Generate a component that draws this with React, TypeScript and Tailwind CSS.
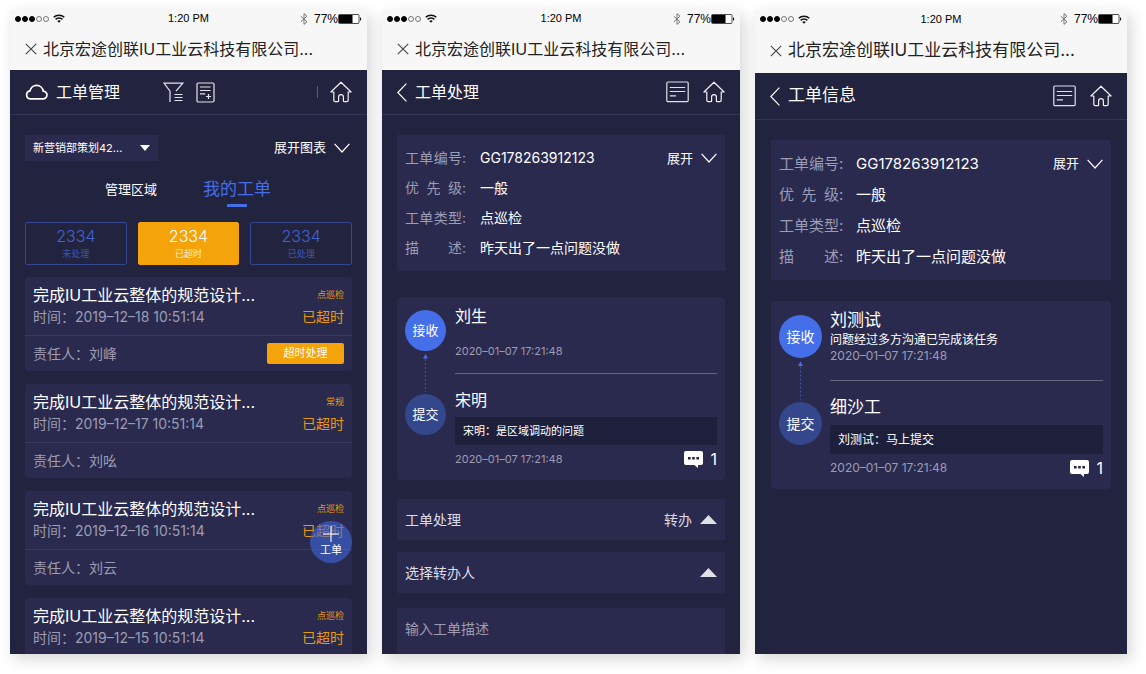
import { useState } from "react";
import type { ReactNode } from "react";
import clsx from "clsx";

const orders = [
  { id: 1, time: "2019–12–18 10:51:14", type: "点巡检", owner: "刘峰", overdue: true },
  { id: 2, time: "2019–12–17 10:51:14", type: "常规", owner: "刘吆", overdue: false },
  { id: 3, time: "2019–12–16 10:51:14", type: "点巡检", owner: "刘云", overdue: false },
  { id: 4, time: "2019–12–15 10:51:14", type: "点巡检", owner: null, overdue: false },
];

const counters = [
  { key: "todo", label: "未处理", count: 2334 },
  { key: "overdue", label: "已超时", count: 2334 },
  { key: "done", label: "已处理", count: 2334 },
];

const fields = [
  { label: "工单编号", value: "GG178263912123" },
  { label: "优 先 级", value: "一般" },
  { label: "工单类型", value: "点巡检" },
  { label: "描 述", value: "昨天出了一点问题没做" },
];

/* ---------- icons ---------- */

function WifiIcon() {
  return (
    <svg width="12" height="9" viewBox="0 0 12 9" fill="none" stroke="#111" strokeWidth="1.5">
      <path d="M.7 3.3a7.6 7.6 0 0 1 10.6 0" />
      <path d="M2.6 5.4a4.8 4.8 0 0 1 6.8 0" />
      <path d="M6 8.8 4.2 7a2.6 2.6 0 0 1 3.6 0z" fill="#111" stroke="none" />
    </svg>
  );
}

function BluetoothIcon() {
  return (
    <svg width="8" height="12" viewBox="0 0 8 12" fill="none" stroke="#777" strokeWidth="1">
      <path d="M.8 3.2 7 8.8 4 11.4V.6L7 3.2.8 8.8" />
    </svg>
  );
}

function BatteryIcon() {
  return (
    <svg width="24" height="10" viewBox="0 0 24 10">
      <rect x=".5" y=".5" width="20.5" height="9" rx="1" fill="#fff" stroke="#222" strokeWidth=".8" />
      <rect x="1" y="1" width="13.5" height="8" fill="#000" />
      <path d="M22 3.2c1.6.3 1.6 3.3 0 3.6z" fill="#111" />
    </svg>
  );
}

function CloseIcon() {
  return (
    <svg width="12" height="12" viewBox="0 0 12 12" fill="none" stroke="#444" strokeWidth="1.1">
      <path d="m.8.8 10.4 10.4M11.2.8.8 11.2" />
    </svg>
  );
}

function CloudIcon() {
  return (
    <svg width="23" height="16" viewBox="0 0 23 16" fill="none" stroke="#fff" strokeWidth="1.7">
      <path d="M5.2 14.9h12.7a3.9 3.9 0 0 0 .3-7.8 6.7 6.7 0 0 0-13.2-.3 4.1 4.1 0 0 0 .2 8.1z" />
    </svg>
  );
}

function FilterIcon() {
  return (
    <svg width="21" height="21" viewBox="0 0 21 21" fill="none" stroke="#e4e4ee" strokeWidth="1.2">
      <path d="M7 20V9.2L1 1.2h18.8L13 9.2" />
      <path d="M11.5 12.5h8M11.5 15.5h8M11.5 18.5h8" />
    </svg>
  );
}

function AddOrderIcon() {
  return (
    <svg width="19" height="21" viewBox="0 0 19 21" fill="none" stroke="#e4e4ee" strokeWidth="1.2">
      <rect x="1" y="1" width="17" height="19" rx="1.2" />
      <path d="M4 5h10.5M4 8.5h10.5M4 11.8h5.2M12.5 12v5M10 14.5h5" />
    </svg>
  );
}

function NoteIcon() {
  return (
    <svg width="23" height="22" viewBox="0 0 23 22" fill="none" stroke="#e0e0ea" strokeWidth="1.2">
      <rect x=".8" y="1" width="21.4" height="19.6" rx="1.2" />
      <path d="M3.8 6.5h15.4M3.8 10.5h15.4M3.8 14.8h6.2" />
    </svg>
  );
}

function HomeIcon() {
  return (
    <svg width="22" height="22" viewBox="0 0 22 22" fill="none" stroke="#f0f0f6" strokeWidth="1.2" strokeLinejoin="round">
      <path d="M11 1.2.9 11h2.9v8.3c0 .9.5 1.4 1.4 1.4h2.6c.5 0 .8-.3.8-.8V16c0-1.6 1-2.4 2.4-2.4s2.4.8 2.4 2.4v3.9c0 .5.3.8.8.8h2.6c.9 0 1.4-.5 1.4-1.4V11h2.9z" />
    </svg>
  );
}

function BackIcon() {
  return (
    <svg width="10" height="19" viewBox="0 0 10 19" fill="none" stroke="#fff" strokeWidth="1.2">
      <path d="M9.4.6.8 9.5l8.6 8.9" />
    </svg>
  );
}

function ChevronDown() {
  return (
    <svg width="16" height="10" viewBox="0 0 16 10" fill="none" stroke="#fff" strokeWidth="1.2">
      <path d="M.6.8 8 9 15.4.8" />
    </svg>
  );
}

function TriangleUp() {
  return (
    <svg width="17" height="9" viewBox="0 0 17 9" className="shrink-0">
      <path d="M8.5 0 17 9H0z" fill="#dfdfe8" />
    </svg>
  );
}

function CommentIcon() {
  return (
    <svg width="19" height="17" viewBox="0 0 19 17">
      <path
        d="M2 0h15a2 2 0 0 1 2 2v10a2 2 0 0 1-2 2h-3v3l-3.6-3H2a2 2 0 0 1-2-2V2a2 2 0 0 1 2-2z"
        fill="#fff"
      />
      <path d="M4 6h2.6v2.4H4zM8.2 6h2.6v2.4H8.2zM12.4 6H15v2.4h-2.6z" fill="#22233f" />
    </svg>
  );
}

/* ---------- shared ---------- */

function Phone({ large, children }: { large?: boolean; children: ReactNode }) {
  return (
    <section className="relative flex min-w-0 flex-col overflow-hidden bg-[#22233f] text-white shadow-[4px_5px_14px_rgba(0,0,0,0.16)]">
      <div className="shrink-0 bg-[#f7f7f7] text-[#222]">
        <div
          className={clsx(
            "grid grid-cols-3 items-center px-[5px] font-['Liberation_Sans',sans-serif] text-[11px] text-black",
            large ? "h-[18px]" : "h-[17px]"
          )}
        >
          <div className="flex items-center gap-1">
            <div className="flex gap-px">
              {[1, 2, 3, 4, 5].map((n) => (
                <i
                  key={n}
                  className={clsx("size-[6px] rounded-full border", n > 3 ? "border-[#777]" : "border-black bg-black")}
                />
              ))}
            </div>
            <WifiIcon />
          </div>
          <span className="text-center">1:20 PM</span>
          <div className="flex items-center justify-end">
            <BluetoothIcon />
            <span className="ml-1.5 text-xs">77%</span>
            <BatteryIcon />
          </div>
        </div>
        <div className={clsx("flex items-center gap-1.5 px-[15px]", large ? "h-[45px] text-[17px]" : "h-[43px] text-base")}>
          <button aria-label="关闭">
            <CloseIcon />
          </button>
          <h1 className="truncate">北京宏途创联IU工业云科技有限公司...</h1>
        </div>
      </div>
      {children}
    </section>
  );
}

function DetailHeader({ title, large }: { title: string; large?: boolean }) {
  return (
    <header
      className={clsx(
        "flex shrink-0 items-center border-b border-[#34355a] px-[15px]",
        large ? "h-[47px] text-[17px]" : "h-[45px] text-base"
      )}
    >
      <button aria-label="返回">
        <BackIcon />
      </button>
      <h2 className="ml-2">{title}</h2>
      <button className="ml-auto" aria-label="工单记录">
        <NoteIcon />
      </button>
      <button className="ml-3.5" aria-label="首页">
        <HomeIcon />
      </button>
    </header>
  );
}

function OrderFields({ large }: { large?: boolean }) {
  return (
    <div
      className={clsx(
        "flex items-start justify-between bg-[#2a2a4e] p-2",
        large ? "text-[15px] leading-[31px]" : "text-sm leading-[30px]"
      )}
    >
      <dl>
        {fields.map((f) => (
          <div key={f.label} className="flex">
            <dt className="flex text-[#9c9cb4]">
              <span className={clsx("[text-align-last:justify]", large ? "w-[60px]" : "w-[57px]")}>{f.label}</span>
              <span className={clsx(large ? "w-[17px]" : "w-[18px]")}>:</span>
            </dt>
            <dd>{f.value}</dd>
          </div>
        ))}
      </dl>
      <button className="flex items-center gap-2 text-[13px]">
        展开
        <ChevronDown />
      </button>
    </div>
  );
}

function Step({ label, active, large }: { label: string; active?: boolean; large?: boolean }) {
  return (
    <span
      className={clsx(
        "flex items-center justify-center rounded-full",
        large ? "size-[43px] text-sm" : "size-[41px] text-[13px]",
        active ? "bg-[#456fe8]" : "bg-[#34478c]"
      )}
    >
      {label}
    </span>
  );
}

type TimelineProps = {
  receiver: string;
  result?: string;
  sender: string;
  comment: string;
  large?: boolean;
};

function Timeline({ receiver, result, sender, comment, large }: TimelineProps) {
  const name = large ? "text-[17px] leading-[22px]" : "text-base leading-[22px]";
  const date = large ? "text-xs leading-4 text-[#9c9cb4]" : "text-[11px] leading-4 text-[#9c9cb4]";

  return (
    <div className={clsx("flex rounded bg-[#2a2a4e] px-2 pb-[13px]", large ? "gap-2" : "gap-[9px]")}>
      <div className={clsx("flex shrink-0 flex-col items-center", large ? "pt-[14px]" : "pt-[13px]")}>
        <Step label="接收" active large={large} />
        <svg width="7" height={large ? 44 : 43} viewBox="0 0 7 43" fill="none">
          <path d="M3.5 3 6 7.5H1z" fill="#456fe8" />
          <path d="M3.5 8v33" stroke="#3b56ae" strokeDasharray="2 2" />
        </svg>
        <Step label="提交" large={large} />
      </div>
      <div className="min-w-0 flex-1">
        <div
          className={clsx(
            "flex flex-col border-b border-[#66667f] pt-2",
            large ? "min-h-[80px] pb-4" : "min-h-[77px] pb-3.5"
          )}
        >
          <p className={name}>{receiver}</p>
          {result && <p className="truncate text-xs leading-[17px]">{result}</p>}
          <time className={clsx("mt-auto", date)}>2020–01–07 17:21:48</time>
        </div>
        <p className={clsx("pt-[15px]", name)}>{sender}</p>
        <p
          className={clsx(
            "flex items-center bg-[#1e1f3b] px-2",
            large ? "mt-[7px] h-[29px] text-xs" : "mt-1.5 h-7 text-[11px]"
          )}
        >
          {comment}
        </p>
        <div className="mt-[6px] flex items-center justify-between">
          <time className={date}>2020–01–07 17:21:48</time>
          <button className="flex h-4 items-center gap-[7px] text-base" aria-label="评论">
            <CommentIcon />1
          </button>
        </div>
      </div>
    </div>
  );
}

/* ---------- screens ---------- */

function OrderList() {
  const [tab, setTab] = useState("mine");
  const [status, setStatus] = useState("overdue");

  return (
    <Phone>
      <header className="flex h-[45px] shrink-0 items-center border-b border-[#34355a] px-[15px]">
        <CloudIcon />
        <h2 className="ml-2 text-base">工单管理</h2>
        <button className="ml-[43px]" aria-label="筛选">
          <FilterIcon />
        </button>
        <button className="ml-3" aria-label="新建">
          <AddOrderIcon />
        </button>
        <i className="mr-3 ml-auto h-3 w-px bg-[#5d5e7c]" />
        <button aria-label="首页">
          <HomeIcon />
        </button>
      </header>

      <div className="px-[15px] pt-5">
        <div className="flex items-center justify-between">
          <label className="relative flex h-[26px] w-[133px] items-center bg-[#2a2a4e]">
            <select className="h-full w-full appearance-none px-2 text-[11px] outline-none" aria-label="部门">
              <option>新营销部策划42...</option>
            </select>
            <svg width="10" height="6" viewBox="0 0 10 6" className="pointer-events-none absolute right-2">
              <path d="M0 0h10L5 6z" fill="#fff" />
            </svg>
          </label>
          <button className="flex items-center gap-2 pr-0.5 text-[13px]">
            展开图表
            <ChevronDown />
          </button>
        </div>

        <div className="mt-[14px] flex h-[33px] items-start justify-center gap-[46px] pr-px">
          <button className="h-[30px] text-[13px]" onClick={() => setTab("area")}>
            管理区域
          </button>
          <button
            className="flex flex-col items-center text-[17px] leading-[29px] text-[#456fe8]"
            onClick={() => setTab("mine")}
          >
            我的工单
            {tab === "mine" && <i className="h-[3px] w-5 bg-[#456fe8]" />}
          </button>
        </div>

        <div className="mt-[14px] grid grid-cols-3 gap-[11px]">
          {counters.map((c) => (
            <button
              key={c.key}
              onClick={() => setStatus(c.key)}
              className={clsx(
                "flex h-[43px] flex-col items-center justify-center rounded-xs border",
                status === c.key ? "border-[#f5a30a] bg-[#f5a30a] text-white" : "border-[#324790] text-[#4263cf]"
              )}
            >
              <span className="text-base leading-5 font-light">{c.count}</span>
              <span className="text-[9px] leading-[15px] opacity-80">{c.label}</span>
            </button>
          ))}
        </div>

        <ul className="mt-3 flex flex-col gap-[13px]">
          {orders.map((o) => (
            <li key={o.id} className="rounded bg-[#2a2a4e]">
              <div className="flex justify-between border-b border-[#3a3a5f] px-2 pt-[7px] pb-2">
                <div className="min-w-0">
                  <h3 className="truncate text-base leading-[22px]">完成IU工业云整体的规范设计...</h3>
                  <p className="text-sm leading-[21px] text-[#9c9cb4]">时间：{o.time}</p>
                </div>
                <div className="shrink-0 text-right text-[#e8990f]">
                  <p className="text-[9px] leading-[22px]">{o.type}</p>
                  <p className="text-sm leading-[21px]">已超时</p>
                </div>
              </div>
              {o.owner && (
                <div className="flex h-[35px] items-center justify-between px-2 text-sm text-[#9c9cb4]">
                  责任人：{o.owner}
                  {o.overdue && (
                    <button className="h-[21px] w-[77px] rounded-xs bg-[#f5a30a] text-[11px] text-white">超时处理</button>
                  )}
                </div>
              )}
            </li>
          ))}
        </ul>
      </div>

      {/* floating create button */}
      <button className="absolute right-[15px] bottom-[91px] flex size-[42px] flex-col items-center rounded-full bg-[#4068dc]/60 pt-[5px] text-[11px]">
        <svg width="16" height="16" viewBox="0 0 16 16" stroke="#fff" strokeWidth="1.1">
          <path d="M8 0v16M0 8h16" />
        </svg>
        <span className="leading-4">工单</span>
      </button>
    </Phone>
  );
}

function OrderHandle() {
  return (
    <Phone>
      <DetailHeader title="工单处理" />
      <div className="px-[15px] pt-5">
        <OrderFields />
        <div className="mt-[26px]">
          <Timeline receiver="刘生" sender="宋明" comment="宋明：是区域调动的问题" />
        </div>
        <div className="mt-[19px] flex h-[41px] items-center gap-2 bg-[#2a2a4e] px-2 text-sm text-[#dcdce6]">
          <label htmlFor="action" className="mr-auto">
            工单处理
          </label>
          <select id="action" className="appearance-none outline-none [field-sizing:content]">
            <option>转办</option>
          </select>
          <TriangleUp />
        </div>
        <div className="mt-3 flex h-[41px] items-center gap-2 bg-[#2a2a4e] px-2 text-sm text-[#dcdce6]">
          <select className="flex-1 appearance-none outline-none" aria-label="选择转办人">
            <option>选择转办人</option>
          </select>
          <TriangleUp />
        </div>
        <textarea
          className="mt-[15px] block h-20 w-full resize-none bg-[#2a2a4e] px-2 py-[11px] text-sm outline-none placeholder:text-[#9c9cb4]"
          placeholder="输入工单描述"
          aria-label="工单描述"
        />
      </div>
    </Phone>
  );
}

function OrderInfo() {
  return (
    <Phone large>
      <DetailHeader title="工单信息" large />
      <div className="px-4 pt-5">
        <OrderFields large />
        <div className="mt-[21px]">
          <Timeline
            receiver="刘测试"
            result="问题经过多方沟通已完成该任务"
            sender="细沙工"
            comment="刘测试：马上提交"
            large
          />
        </div>
      </div>
    </Phone>
  );
}

export default function App() {
  return (
    <main
      lang="zh-CN"
      className="grid h-screen grid-cols-[357fr_358fr_372fr] gap-[15px] bg-white pt-[10px] pr-[19px] pb-5 pl-[10px] font-['Inter','Noto_Sans_CJK_SC',sans-serif]"
    >
      <OrderList />
      <OrderHandle />
      <OrderInfo />
    </main>
  );
}
